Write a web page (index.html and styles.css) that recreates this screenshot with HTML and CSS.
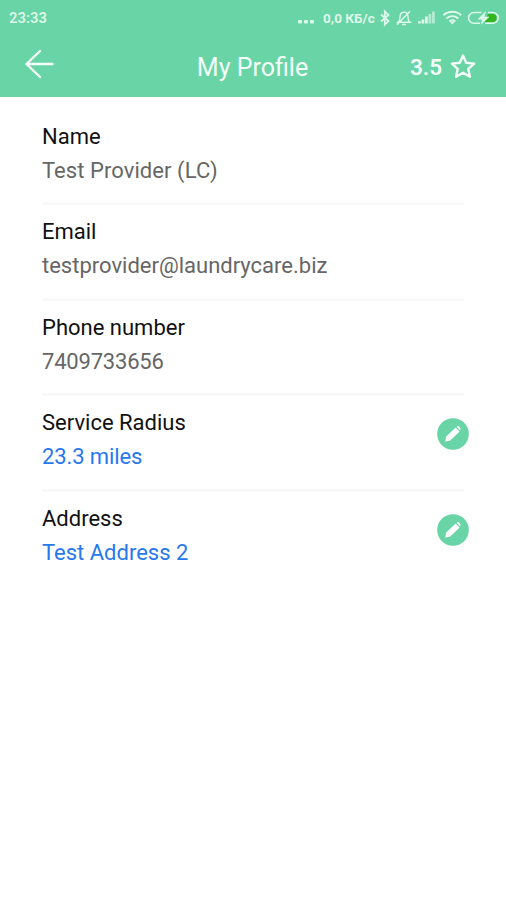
FILE: index.html
```html
<!DOCTYPE html>
<html lang="en">
<head>
<meta charset="utf-8">
<title>My Profile</title>
<link rel="stylesheet" href="styles.css">
</head>
<body>
<header class="header">
  <div class="status">
    <span class="time">23:33</span>
    <svg class="dots" width="18" height="18" viewBox="0 0 18 18"><g fill="currentColor"><rect x="0" y="11" width="4" height="3.600" rx="1"/><rect x="6" y="11" width="4" height="3.600" rx="1"/><rect x="12" y="11" width="4" height="3.600" rx="1"/></g></svg>
    <span class="speed">0,0 КБ/с</span>
    <svg class="icons" width="120" height="18" viewBox="0 0 120 18" fill="none" stroke="currentColor" stroke-width="1.5">
      <path d="M1 5.500 8.500 12l-3.700 3.700V2.300L8.500 6 1 12.500" stroke-width="1.800"/>
      <g stroke-width="1.4"><path d="M18 13.300c1.500-1 2-3 2-5 0-3.500 1.500-5 4-5s4 1.500 4 5c0 2 .500 4 2 5zM22 15.500h4M17 15.800 30 2.200"/></g>
      <g stroke="none" fill="currentColor"><path d="M38 14.500V12.300h2.800v2.200zM41.500 14.500v-4h2.800v4zM45 14.500V7.500h2.800v7z"/><path opacity=".65" d="M48.500 14.500V5h2.800v9.500zM52 14.500V2.500h2.800v12z"/></g>
      <g stroke-width="2"><path d="M63.300 6.300c5.400-4.700 12.800-4.700 18 0M66.300 9.500c3.600-3 8.400-3 12 0M69.300 12.500c2-1.500 4-1.500 6 0"/></g><path d="m70 13 2.300 2.500L74.600 13z" fill="currentColor" stroke="none"/>
      <path d="M108 5H112.500a4 4 0 0 1 0 8H104.500z" fill="#35b51b" stroke="none"/>
      <path d="M100 14.300H94a5.400 5.400 0 0 1 0-10.800h7.500M108 3.500h4.800a5.400 5.400 0 0 1 0 10.800H105" stroke-width="1.600"/>
      <path d="m105.500 2.800-7.500 7.400h4.400L101.200 15.200l7.800-7.300h-4.800z" fill="currentColor" stroke="currentColor" stroke-width=".5"/>
    </svg>
  </div>
  <div class="toolbar">
    <svg class="back" width="30" height="30" viewBox="0 0 30 30" fill="none" stroke="currentColor" stroke-width="2.400" stroke-linecap="round" stroke-linejoin="round"><path d="M27.500 15H1.500M15 2 1.500 15 15 28"/></svg>
    <h1 class="title">My Profile</h1>
    <div class="rating"><span class="score">3.5</span><svg width="26" height="26" viewBox="0 0 26 26" fill="none" stroke="currentColor" stroke-width="2.400" stroke-linejoin="round"><path d="m13 1.500 3.200 7.200 7.900.9-5.800 5.300 1.600 7.900-6.900-4-6.900 4 1.600-7.900L1.900 9.600l7.900-.9z"/></svg></div>
  </div>
</header>
<main class="profile">
  <section class="row"><div><div class="label">Name</div><div class="value name">Test Provider (LC)</div></div></section>
  <section class="row"><div><div class="label">Email</div><div class="value">testprovider@laundrycare.biz</div></div></section>
  <section class="row"><div><div class="label">Phone number</div><div class="value phone">7409733656</div></div></section>
  <section class="row"><div><div class="label">Service Radius</div><div class="value link radius">23.3 miles</div></div>
    <svg class="edit" width="32" height="32" viewBox="0 0 32 32"><circle cx="16" cy="16" r="15.800"/><path class="pen" d="m8.200 23.600.8-4.800L18.600 9.400l4 4-9.600 9.400zM19.500 8.600q1.600-1.200 3.200.4t.3 3.500z"/></svg></section>
  <section class="row"><div><div class="label">Address</div><div class="value link">Test Address 2</div></div>
    <svg class="edit" width="32" height="32" viewBox="0 0 32 32"><circle cx="16" cy="16" r="15.800"/><path class="pen" d="m8.200 23.600.8-4.800L18.600 9.400l4 4-9.600 9.400zM19.500 8.600q1.600-1.200 3.200.4t.3 3.500z"/></svg></section>
</main>
</body>
</html>
```
FILE: styles.css
```css
* { box-sizing: border-box; }
body { margin: 0; min-height: 900px; background: #fff; font-family: Roboto, "Liberation Sans", sans-serif; }
svg { display: block; flex: none; }
.header { height: 97px; background: #69d4a5; color: #f4fff9; }
.status { display: flex; align-items: center; height: 36px; padding: 0 6px 0 9px; font-size: 14px; font-weight: 600; white-space: nowrap; color: #dcf8ea; }
.time { font-size: 14.800px; }
.dots { margin-left: auto; margin-top: -1px; }
.speed { width: 55px; margin-left: 7px; margin-top: -1px; font-size: 13.600px; font-weight: 700; }
.icons { margin-left: 2px; }
.toolbar { display: grid; grid-template-columns: 1fr auto 1fr; align-items: center; height: 61px; padding: 0 30px 0 25px; }
.back { margin-top: -6px; }
.title { margin: 2px 0 0 4px; font-size: 25px; font-weight: 400; line-height: 30px; }
.rating { display: flex; justify-content: flex-end; align-items: center; gap: 8px; font-size: 22.500px; font-weight: 600; }
.score { margin-top: 1px; }
.profile { padding: 12.500px 42px 0; }
.row { display: flex; justify-content: space-between; height: 95.600px; padding-top: 10px; border-bottom: 3px solid #f8f8f8; }
.row:last-child { border-bottom: 0; }
.label, .value { font-size: 22px; line-height: 34px; white-space: nowrap; }
.label { color: #111; }
.value { color: #666; }
.link { color: #2878ed; }
.name { letter-spacing: .06px; }
.phone { letter-spacing: -.2px; }
.radius { letter-spacing: -.1px; }
.edit { margin: 12px -5px 0 0; fill: #69d4a5; }
.pen { fill: #fff; }
```
